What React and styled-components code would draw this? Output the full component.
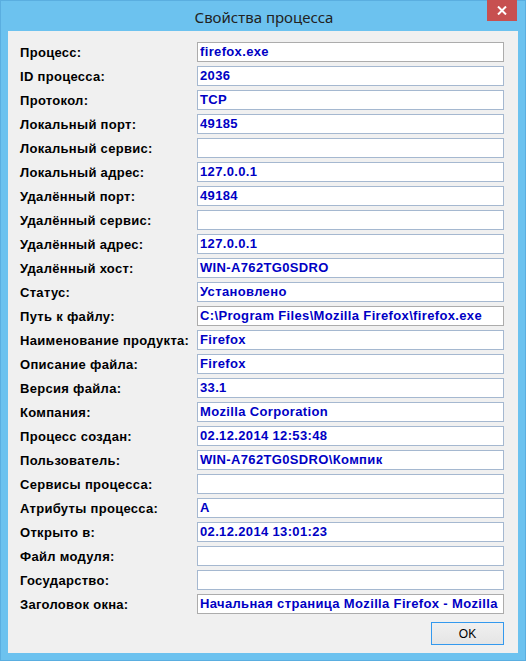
import React from "react";
import styled, { createGlobalStyle } from "styled-components";

const Global = createGlobalStyle`
  html, body { margin: 0; padding: 0; background: #6cc2ef; }
  * { box-sizing: border-box; }
`;

const Window = styled.div`
  width: 526px;
  height: 661px;
  background: #6cc2ef;
  border: 1px solid #5aaee0;
  display: flex;
  flex-direction: column;
  padding: 0 7px 7px 7px;
`;

const TitleBar = styled.div`
  height: 30px;
  display: grid;
  grid-template-columns: 1fr auto 1fr;
  align-items: start;
`;

const Title = styled.div`
  grid-column: 2;
  font-family: "Noto Sans", "Open Sans", sans-serif;
  font-size: 15px;
  line-height: 30px;
  color: #222;
  padding-top: 1px;
  margin-left: 2px;
`;

const CloseButton = styled.div`
  grid-column: 3;
  justify-self: end;
  width: 30px;
  height: 21px;
  margin-top: -1px;
  margin-right: 1px;
  background: #c75050;
  display: flex;
  align-items: center;
  justify-content: center;
`;

const Client = styled.div`
  flex: 1;
  background: #f0f0f0;
  padding: 11px 14px 8px 12px;
  display: flex;
  flex-direction: column;
  gap: 4px;
`;

const Row = styled.div`
  display: grid;
  grid-template-columns: 177px 1fr;
  height: 20px;
  align-items: center;
`;

const Label = styled.div`
  font-family: "Liberation Sans", Arial, sans-serif;
  font-weight: bold;
  font-size: 13px;
  letter-spacing: 0.3px;
  color: #000;
  white-space: nowrap;
`;

const Field = styled.div`
  height: 20px;
  background: #fff;
  border: 1px solid ${(p) => (p.$gray ? "#acacac" : "#a5b8d0")};
  font-family: "Liberation Sans", Arial, sans-serif;
  font-weight: bold;
  font-size: 13px;
  letter-spacing: 0.35px;
  line-height: 18px;
  color: #0000c4;
  padding-left: 2px;
  white-space: nowrap;
  overflow: hidden;
`;

const Footer = styled.div`
  display: flex;
  justify-content: flex-end;
  margin-top: 4px;
`;

const OkButton = styled.button`
  width: 73px;
  height: 23px;
  border: 1px solid #3399ee;
  background: linear-gradient(#f0f0f0, #e5e5e5);
  font-family: "Liberation Sans", Arial, sans-serif;
  font-size: 12px;
  color: #000;
  padding: 0;
`;

const rows = [
  ["Процесс:", "firefox.exe", true],
  ["ID процесса:", "2036"],
  ["Протокол:", "TCP"],
  ["Локальный порт:", "49185"],
  ["Локальный сервис:", ""],
  ["Локальный адрес:", "127.0.0.1"],
  ["Удалённый порт:", "49184"],
  ["Удалённый сервис:", ""],
  ["Удалённый адрес:", "127.0.0.1"],
  ["Удалённый хост:", "WIN-A762TG0SDRO"],
  ["Статус:", "Установлено"],
  ["Путь к файлу:", "C:\\Program Files\\Mozilla Firefox\\firefox.exe", true],
  ["Наименование продукта:", "Firefox"],
  ["Описание файла:", "Firefox"],
  ["Версия файла:", "33.1"],
  ["Компания:", "Mozilla Corporation"],
  ["Процесс создан:", "02.12.2014 12:53:48"],
  ["Пользователь:", "WIN-A762TG0SDRO\\Компик"],
  ["Сервисы процесса:", ""],
  ["Атрибуты процесса:", "A"],
  ["Открыто в:", "02.12.2014 13:01:23"],
  ["Файл модуля:", ""],
  ["Государство:", ""],
  ["Заголовок окна:", "Начальная страница Mozilla Firefox - Mozilla", true],
];

export default function App() {
  return (
    <>
      <Global />
      <Window>
        <TitleBar>
          <Title>Свойства процесса</Title>
          <CloseButton>
            <svg width="10" height="9" viewBox="0 0 10 9">
              <path d="M1 0.5 L9 8.5 M9 0.5 L1 8.5" stroke="#fff" strokeWidth="2" />
            </svg>
          </CloseButton>
        </TitleBar>
        <Client>
          {rows.map(([label, value, gray]) => (
            <Row key={label}>
              <Label>{label}</Label>
              <Field $gray={gray}>{value}</Field>
            </Row>
          ))}
          <Footer>
            <OkButton>OK</OkButton>
          </Footer>
        </Client>
      </Window>
    </>
  );
}
